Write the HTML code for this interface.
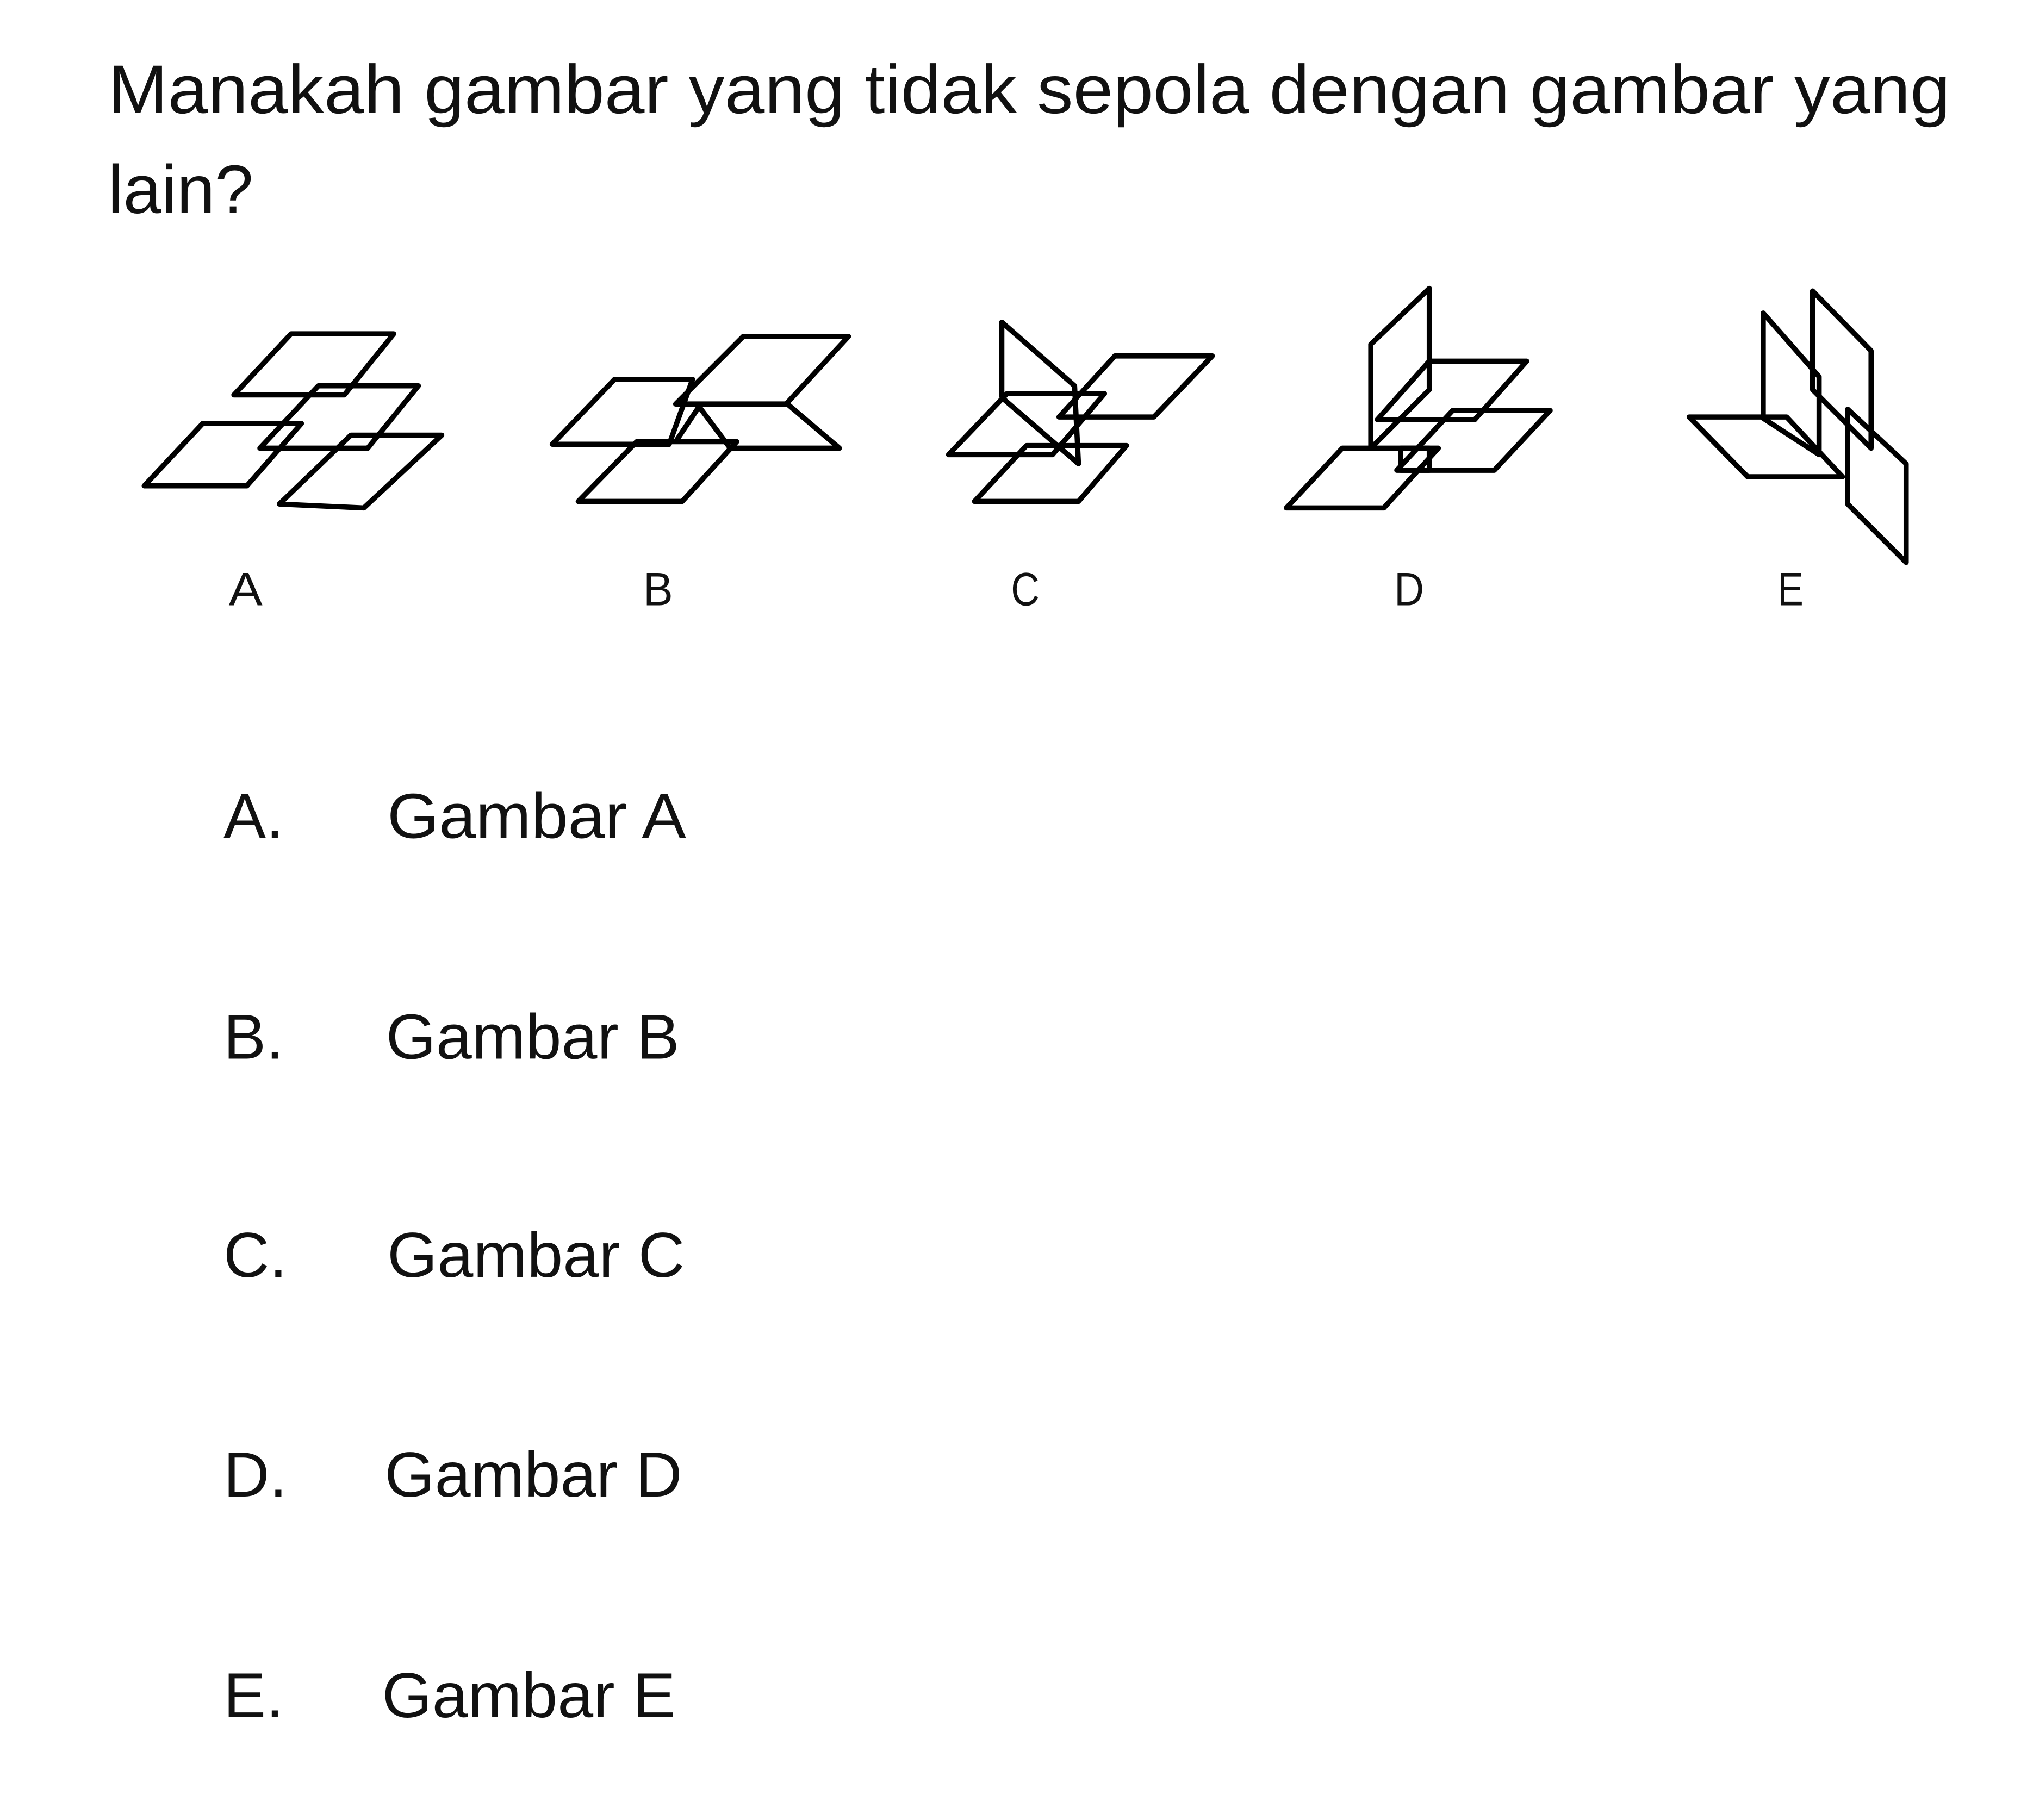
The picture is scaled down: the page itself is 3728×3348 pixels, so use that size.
<!DOCTYPE html>
<html><head><meta charset="utf-8"><style>
html,body{margin:0;padding:0;background:#fff;}
svg{display:block;}
</style></head><body>
<svg width="3728" height="3348" viewBox="0 0 1560 1401" preserveAspectRatio="none" xmlns="http://www.w3.org/2000/svg">
<rect width="1560" height="1401" fill="#fff"/>
<g font-family="Liberation Sans, sans-serif" fill="#111">
<text x="83" y="87" font-size="53" textLength="1418" lengthAdjust="spacingAndGlyphs">Manakah gambar yang tidak sepola dengan gambar yang</text>
<text x="83" y="164" font-size="53">lain?</text>
<g font-size="36">
<text x="176" y="466" textLength="26" lengthAdjust="spacingAndGlyphs">A</text><text x="495" y="466" textLength="23" lengthAdjust="spacingAndGlyphs">B</text><text x="778" y="466" textLength="22" lengthAdjust="spacingAndGlyphs">C</text><text x="1073" y="466" textLength="23" lengthAdjust="spacingAndGlyphs">D</text><text x="1368" y="466" textLength="20" lengthAdjust="spacingAndGlyphs">E</text>
</g>
<g font-size="49">
<text x="172" y="645">A.</text><text x="298" y="645" textLength="230" lengthAdjust="spacingAndGlyphs">Gambar A</text>
<text x="172" y="815">B.</text><text x="297" y="815" textLength="226" lengthAdjust="spacingAndGlyphs">Gambar B</text>
<text x="172" y="983">C.</text><text x="298" y="983" textLength="229" lengthAdjust="spacingAndGlyphs">Gambar C</text>
<text x="172" y="1152">D.</text><text x="296" y="1152" textLength="229" lengthAdjust="spacingAndGlyphs">Gambar D</text>
<text x="172" y="1322">E.</text><text x="294" y="1322" textLength="226" lengthAdjust="spacingAndGlyphs">Gambar E</text>
</g>
</g>
<g fill="none" stroke="#000" stroke-width="4" stroke-linejoin="round">
<polygon points="224,257 303,257 265,304 180,304"/>
<polygon points="245,297 322,297 283,345 200,345"/>
<polygon points="156,326 232,326 190,374 111,374"/>
<polygon points="270,335 340,335 280,391 215,388"/>
<polygon points="473,292 533,292 515,342 425,342"/>
<polygon points="572,259 653,259 605,311 520,311"/>
<polygon points="490,340 567,340 525,386 445,386"/>
<polyline points="520,340 538,313 562,345"/>
<polyline points="606,311 646,345 560,345"/>
<polyline points="771,306 771,248 827,297 830,357 771,306"/>
<polygon points="858,274 933,274 888,321 815,321"/>
<polygon points="775,303 850,303 810,350 730,350"/>
<polygon points="790,343 867,343 830,386 750,386"/>
<polygon points="1055,265 1100,222 1100,300 1055,345"/>
<polygon points="1100,278 1175,278 1135,323 1060,323"/>
<polygon points="1118,316 1193,316 1150,362 1075,362"/>
<polygon points="1033,345 1107,345 1065,391 990,391"/>
<rect x="1078" y="345" width="22" height="17"/>
<polygon points="1357,241 1400,290 1400,350 1357,322"/>
<polygon points="1395,224 1440,270 1440,345 1395,300"/>
<polygon points="1300,321 1375,321 1418,367 1345,367"/>
<polygon points="1422,315 1467,357 1467,433 1422,388"/>
</g>
</svg>
</body></html>
